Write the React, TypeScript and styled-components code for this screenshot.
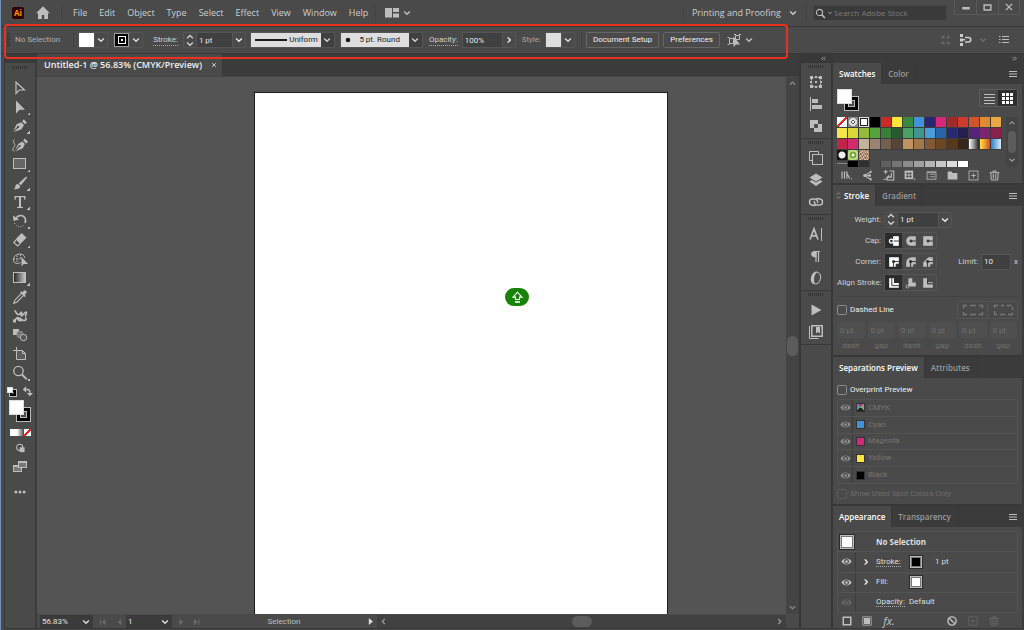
import React from "react";
import styled, { createGlobalStyle, css } from "styled-components";

const c = {
  panel: "#4a4a4a",
  dark: "#3b3b3b",
  line: "#383838",
  field: "#404040",
  soft: "#555555",
  text: "#cfcfcf",
  bright: "#f0f0f0",
  dim: "#6a6a6a",
  icon: "#bdbdbd",
};

const GlobalStyle = createGlobalStyle`
  * { box-sizing: border-box; }
  body { margin: 0; background: ${c.panel}; }
  button, input, select {
    font: inherit; color: inherit; background: none; border: 0; padding: 0; margin: 0;
    appearance: none; border-radius: 0; outline: none; min-width: 0;
  }
  ul { list-style: none; margin: 0; padding: 0; }
`;

/* ---------- icons ---------- */

const Svg = styled.svg<{ $w?: number; $h?: number }>`
  display: block;
  flex: none;
  width: ${(p) => p.$w ?? 16}px;
  height: ${(p) => p.$h ?? p.$w ?? 16}px;
  fill: none;
  stroke: currentColor;
`;

const F = { fill: "currentColor", stroke: "none" };
const cut = { stroke: "#333", strokeWidth: 1.1 };

const art: Record<string, React.ReactNode> = {
  select: <path d="M4 2.2v11.300l3.200-3.500h5.300z" strokeWidth="1.200" />,
  direct: <path {...F} d="M4 1.500v13l3.500-3.700H13z" />,
  pen: (
    <g {...F}>
      <path d="M9.300 4.200 12 7l-2.400 4.300L2 14l3.800-4a1.100 1.100 0 1 0-.8-.8L1.200 13.200 4.600 6.200z" />
      <path d="M10.200 3.300 11.800 1.300l3 3.100-1.800 1.800z" />
    </g>
  ),
  curvature: (
    <g>
      <g {...F}>
        <path d="M10.500 4.500 12.900 7l-2.100 4.200-7 3 3.600-4.100a1 1 0 1 0-.8-.8L3 13.300 6.300 6.700z" />
        <path d="m11.300 3.600 1.500-2 3.200 3.200-1.800 1.700z" />
      </g>
      <path d="M2.500 2.500C-.5 5 4 6.500 2.500 9.500-.2 12 .5 14 2.500 14" />
    </g>
  ),
  rect: <rect x="1.500" y="2.500" width="12" height="10" fill="#666" />,
  brush: (
    <g {...F}>
      <path d="M14.200 1.400 15.200 2.400 8.900 10.300 6.700 8.300z" />
      <path d="M6 9 8.200 11c0 2.500-3.200 3.800-6.600 3.200 1.900-.6 1.300-2.200 2-3.600C4 9.500 5 8.800 6 9z" />
    </g>
  ),
  type: <path {...F} d="M2.500 2h11v3.700h-1.100L12 3.300H9v9.200l1.800.5v1H5.200v-1l1.800-.5V3.300H4l-.4 2.400H2.500z" />,
  rotate: (
    <g>
      <path d="M4 5.200C6 1.800 11 1.400 13 5c.8 1.600.8 3.400 0 5" strokeWidth="1.600" />
      <path {...F} d="M1 2.500 7 6.500 1.500 8z" />
      <path d="M2.500 10C5 15 10 15 12.500 11" strokeDasharray="1 1.500" />
    </g>
  ),
  eraser: (
    <g>
      <path {...F} d="M9.700 1 14.500 5.800 8.300 12 3.600 7.300z" />
      <path d="M4 8 1.800 10.500 5.500 14 8 11.700" strokeWidth="1.200" />
    </g>
  ),
  shaper: (
    <g>
      <path d="M8.500 11.500C4 14 .8 11 1.500 8 2 4.500 5 3 8 3s4.500 1.500 4.500 4" />
      <path d="M1.500 8h8M5 4.500V11M8.500 3.500V8" strokeDasharray="1.500 1" />
      <path {...F} d="M9.500 6v9.500l2.200-2.500h4.300z" />
    </g>
  ),
  gradient: <rect x="1.500" y="2.500" width="12" height="10" fill="url(#toolGrad)" />,
  dropper: (
    <g>
      <path d="M9.300 4.700 2.800 11.200 1.800 14.200l3-1L11.300 6.700" strokeWidth="1.200" />
      <path {...F} d="M8 3.400 9.200 2.200 10.400 3.300 12 1.500a1.900 1.900 0 0 1 2.500 2.500L12.700 5.600 13.900 6.900 12.700 8.100z" />
    </g>
  ),
  puppet: (
    <g>
      <path d="M2.500 2.500C4 3 4 6 6 6.500S9 3.500 9.500 4.500 8.500 8 9.500 8s3-4 4.500-4-1.500 4 0 4.500" strokeWidth="1.700" />
      <path d="M2.500 13C4 9.500 6 9.500 8 10.500s3 2.500 4.500 2 2-2 1-3M5 9c0 3 2 4 5 3.500" strokeWidth="1.700" />
      <path {...F} d="M1 11.500h3v3H1z" />
    </g>
  ),
  blend: (
    <g>
      <rect {...F} x="1" y="2" width="6" height="6" />
      <rect x="5" y="4.500" width="6" height="6" rx="2" fill="#777" stroke="#8d8d8d" />
      <circle cx="11.500" cy="10.500" r="3.200" fill="#555" />
    </g>
  ),
  artboard: (
    <g>
      <path d="M4.500 1v3.500M1 4.500h3.500" />
      <path d="M4.500 4.500h6l3 3v6h-9z" fill="#5c5c5c" />
      <path d="M10.500 4.500v3h3" />
    </g>
  ),
  zoom: (
    <g>
      <circle cx="6.500" cy="6" r="4.700" strokeWidth="1.300" />
      <path d="m10 9.500 4.800 4.800" strokeWidth="1.900" />
    </g>
  ),
  drawMode: (
    <g>
      <circle cx="7" cy="6.500" r="3.800" strokeWidth="1.300" />
      <rect {...F} x="7" y="6.500" width="6" height="6" />
    </g>
  ),
  screen: (
    <g>
      <rect x="1.500" y="6.500" width="8" height="6" fill="#777" />
      <rect x="6.500" y="2.500" width="8" height="6" fill="#777" />
      <path d="M6 3.500h9M1 7.500h5" />
    </g>
  ),
  more: (
    <g {...F}>
      <circle cx="2.500" cy="8" r="2" />
      <circle cx="8" cy="8" r="2" />
      <circle cx="13.500" cy="8" r="2" />
    </g>
  ),
  down: <path d="M4.700 6.300 8 9.500l3.300-3.200" strokeWidth="1.600" />,
  up: <path d="M4.700 9.500 8 6.300l3.300 3.200" strokeWidth="1.600" />,
  right: <path d="M6.500 5 9.500 8l-3 3" strokeWidth="1.600" />,
  left: <path d="M9.500 5 6.500 8l3 3" strokeWidth="1.600" />,
  home: <path {...F} d="M8 1.200 1 8.300h2V14h3.800V10h2.400v4H13V8.300h2z" />,
  layout: <path {...F} d="M1 3h7v9.500H1zM9 3h6v4H9zM9 8.500h6v4H9z" />,
  mag: (
    <g>
      <circle cx="6.500" cy="6.500" r="4.500" strokeWidth="1.600" />
      <path d="m10 10 4.500 4.500" strokeWidth="2.200" />
    </g>
  ),
  burger: <path d="M4 5.500h8M4 8h8M4 10.500h8" />,
  list: <path d="M3 4.500h1.500M3 7.500h1.500M3 10.500h1.500M6 4.500h7M6 7.500h7M6 10.500h7" strokeWidth="1.200" />,
  gridDim: <path {...F} d="M3 2h3v4H3zM9 2h3v4H9zM3 10h3v4H3zM9 10h3v4H9zM1 3.500h5v1.500H1zM9 3.500h5v1.500H9zM1 11h5v1.500H1zM9 11h5v1.500H9z" />,
  align: (
    <g>
      <path {...F} d="M2 2h3v3H2zM2 6.500h3v3H2zM2 11h3v3H2z" />
      <path d="M7 5.500h3.500a2 2 0 0 1 0 4.500H7M5 7.800h2" strokeWidth="1.600" />
    </g>
  ),
  isolate: (
    <g>
      <path d="M3.500 6.500h4v5h-4zM9.500 3.500h4v4h-4zM1.500 5.500h2M1.500 12.500h2M8 2.500h2M13 2.500h2" />
      <path {...F} d="M7.500 4.500V15l2.500-2.500h4.200z" />
    </g>
  ),
  transform: (
    <g>
      <rect x="3.500" y="3.500" width="9" height="9" strokeDasharray="2 1" />
      <path {...F} d="M2 2h3v3H2zM11 2h3v3h-3zM2 11h3v3H2zM11 11h3v3h-3zM7 7h2v2H7zM7 2h2v2H7zM7 12h2v2H7zM2 7h2v2H2zM12 7h2v2h-2z" />
    </g>
  ),
  alignPanel: (
    <g>
      <path d="M2.500 1v14" />
      <path {...F} d="M4 3h6v4H4zM4 9h10v4H4z" />
    </g>
  ),
  pathfinder: (
    <g>
      <path {...F} d="M2 2h8v4h4v8H6v-4H2z" />
      <path d="M6.500 6.500h3v3h-3z" fill="#4a4a4a" stroke="#4a4a4a" />
    </g>
  ),
  transparency: (
    <g>
      <path d="M4.500 10.500h-3v-9h9v3" />
      <rect x="4.500" y="4.500" width="10" height="10" />
    </g>
  ),
  layers: (
    <g {...F}>
      <path d="M8 1.500 14.500 5.500 8 9.500 1.500 5.500z" />
      <path d="M1.500 9.500 4 8l4 2.500L12 8l2.500 1.500L8 14z" />
    </g>
  ),
  links: (
    <path d="M8.500 10A3 3 0 0 1 4.500 11a3 3 0 0 1 0-6h2a3 3 0 0 1 3 4M7.500 6A3 3 0 0 1 11.500 5a3 3 0 0 1 0 6h-2a3 3 0 0 1-3-4" strokeWidth="1.500" />
  ),
  character: (
    <g>
      <path d="M2 13.500 6 3l4 10.500M3.500 9.800h5" strokeWidth="1.700" />
      <path d="M13.500 2v13" />
    </g>
  ),
  paragraph: (
    <g>
      <path {...F} d="M8.500 3v6.500C1.500 9.500 1.500 3 7 3z" />
      <path d="M8 3v11M10.500 3v11M7 3.500h5" strokeWidth="1.200" />
    </g>
  ),
  opentype: (
    <g>
      <ellipse cx="8" cy="8" rx="4.500" ry="6" transform="rotate(12 8 8)" />
      <path {...F} d="M10 1.800C6.500 3.500 5 9 7 14.200 0 13.500 2.500 2 10 1.800z" />
    </g>
  ),
  play: <path {...F} d="M3.500 2.500v11l10-5.500z" />,
  libraries: (
    <g>
      <path d="M1.500 2v12.500h9" />
      <path d="M3.800 1.800h10.400v10.400H3.800z" strokeWidth="1.500" />
      <path {...F} d="M8 3h4v6.500L10 8 8 9.500z" />
    </g>
  ),
  swLib: <path d="M2.500 3v9M5.500 3v9M7.500 3.500l4.500 8.500M8.500 3v9M13.500 12h1.500" strokeWidth="1.400" />,
  swShare: (
    <g>
      <path d="M12 3.500 4 8l8 5M7 8h5" strokeWidth="1.300" />
      <path {...F} d="M3 6.500h4v3H3zM9 6.500h3v3H9zM11 2h2v3h-2zM11 11h2v3h-2z" />
    </g>
  ),
  swAdd: <path d="M2 3.500h5M9 2.500h5.500v11H6.500V10M4.500 1v5M2 12.500h5M11.500 5v5h-5l2.500-2" strokeWidth="1.300" />,
  swKind: (
    <g>
      <rect x="2" y="2" width="10.500" height="10.500" {...F} />
      <path d="M5.500 4v7M9 4v7M3.500 5.500h7.500M3.500 9h7.500" stroke="#4a4a4a" />
      <path d="M13.500 12.500h1.500" strokeWidth="1.500" />
    </g>
  ),
  swOptions: (
    <g>
      <rect x="2.500" y="3.500" width="11" height="9" />
      <path d="M5 6.500h1M5 9.500h1M7 6.500h5M7 9.500h5M3 4.500h10" />
    </g>
  ),
  folder: <path {...F} d="M2 3h5l1 2h6v8H2z" />,
  plus: (
    <g>
      <rect x="2.500" y="2.500" width="11" height="11" />
      <path d="M8 5v6M5 8h6" />
    </g>
  ),
  trash: <path d="M2 4.500h12M6 4V2.500h4V4M3.500 4.500l.5 9h8l.5-9M6.500 6v6M9.500 6v6" strokeWidth="1.200" />,
  square: <rect x="3" y="3" width="10" height="10" strokeWidth="2" />,
  filled: (
    <g>
      <rect x="2.500" y="2.500" width="11" height="11" />
      <path {...F} d="M4 4h8v8H4z" />
    </g>
  ),
  no: (
    <g strokeWidth="1.900">
      <circle cx="8" cy="8" r="5.500" />
      <path d="m4.200 4.200 7.600 7.600" />
    </g>
  ),
  eye: (
    <g>
      <path {...F} d="M.5 8C4 2.300 12 2.300 15.500 8 12 13.700 4 13.700.5 8z" />
      <circle cx="8" cy="8" r="3.600" fill="#4a4a4a" stroke="none" />
      <circle cx="8" cy="8" r="2" {...F} />
    </g>
  ),
  capButt: (
    <g>
      <path {...F} d="M7 2.500h6.500v11H7z" />
      <path {...cut} d="M7 8h6.500" />
      <circle cx="5" cy="8" r="2.200" fill="#2b2b2b" strokeWidth="1.400" />
    </g>
  ),
  capRound: (
    <g>
      <path {...F} d="M8 2.500h5.500v11H8a5.500 5.500 0 0 1 0-11z" />
      <path {...cut} d="M8 8h5.500" />
      <path d="M7 7h2v2H7z" {...cut} fill="#333" />
    </g>
  ),
  capSquare: (
    <g>
      <path {...F} d="M2.500 2.500h11v11h-11z" />
      <path {...cut} d="M8 8h5.500" />
      <path d="M7 7h2v2H7z" {...cut} fill="#333" />
    </g>
  ),
  joinMiter: (
    <g>
      <path {...F} d="M2.500 2.500h11v8H11v3H2.500z" />
      <path {...cut} d="M7.500 13.500v-6h6" />
      <path {...cut} fill="#333" d="M6.500 6.500h2v2h-2zM10.500 10.500h3v3h-3z" />
    </g>
  ),
  joinRound: (
    <g>
      <path {...F} d="M9 2.500h4.500v8h-3v3h-8V9A6.500 6.500 0 0 1 9 2.500z" />
      <path {...cut} d="M7.500 13.500v-6h6" />
      <path {...cut} fill="#333" d="M6.500 6.500h2v2h-2z" />
    </g>
  ),
  joinBevel: (
    <g>
      <path {...F} d="M8.500 2.500h5v8h-3v3h-8V8.500z" />
      <path {...cut} d="M7.500 13.500v-6h6" />
      <path {...cut} fill="#333" d="M6.500 6.500h2v2h-2z" />
    </g>
  ),
  alCenter: (
    <g>
      <path {...F} d="M2.500 2.500H8v5.500h5.500v5.500h-11z" />
      <path {...cut} d="M5.500 2.500v8.500h8" />
    </g>
  ),
  alIn: (
    <g>
      <path {...F} d="M5 2.500h4.500v5h4v4.500H5z" />
      <circle cx="4" cy="12" r="1.700" />
    </g>
  ),
  alOut: (
    <g>
      <path {...F} d="M2.500 2.500h4.500v6h6.500v5h-11z" />
      <path d="M8 7.500h5.500" />
      <path {...cut} d="M7.500 4v5h6" />
    </g>
  ),
  dashA: <path d="M2.500 6V3.500H6M9 3.500h6M18 3.500h3.500V6M2.500 10v2.500H6M9 12.500h6M18 12.500h3.500V10" strokeWidth="1.400" />,
  dashB: <path d="M3.500 6V3.500H7M10 3.500h3M16 3.500h4.500M21.500 5v3M3.500 9v3.500H6M9 12.500h5M17 12.500h4.500V10.500" strokeWidth="1.400" />,
  first: (
    <g>
      <path d="M4 3.500v9" strokeWidth="1.800" />
      <path {...F} d="M12 3v10L6 8z" />
    </g>
  ),
  prev: <path {...F} d="M10 3v10L4.500 8z" />,
  next: <path {...F} d="M5.500 3v10L11.500 8z" />,
  last: (
    <g>
      <path d="M12.500 3.500v9" strokeWidth="1.800" />
      <path {...F} d="M4.500 3v10l6-5z" />
    </g>
  ),
  min: <path d="M2 10h12" strokeWidth="4" />,
  max: <path d="M2 3.500h12v9H2z" strokeWidth="2.500" />,
  close: <path d="m3 3 10 10M13 3 3 13" strokeWidth="2.200" />,
  dblLeft: <path d="M7.500 5 4.500 8l3 3M11.500 5l-3 3 3 3" strokeWidth="1.500" />,
  dblRight: <path d="m4.500 5 3 3-3 3M8.500 5l3 3-3 3" strokeWidth="1.500" />,
  swap: (
    <g>
      <path d="M4 5h3.500a4 4 0 0 1 4 4V11" strokeWidth="2" />
      <path {...F} d="M6 .5v9L1 5zM7 10h9l-4.500 5z" />
    </g>
  ),
  capsLock: (
    <g strokeWidth="1.400">
      <path d="M8 1.500 2.500 7.500h3v3h5v-3h3z" />
      <path d="M5 13.500h6" strokeWidth="2" />
    </g>
  ),
  sort: <path d="M5.500 6.500 8 4l2.500 2.500M5.500 9.500 8 12l2.500-2.500" stroke="#999" strokeWidth="1.200" />,
};

const Icon = ({ n, w = 16, h }: { n: string; w?: number; h?: number }) => (
  <Svg $w={w} $h={h} viewBox={n.startsWith("dash") ? "0 0 24 16" : "0 0 16 16"} aria-hidden="true">
    {art[n]}
  </Svg>
);

/* ---------- shell ---------- */

const Shell = styled.div`
  min-height: 100vh;
  display: flex;
  flex-direction: column;
  position: relative;
  padding-bottom: 1px;
  border-left: 1px solid #7590b0;
  background: ${c.panel};
  color: ${c.text};
  font: 8px/10px Roboto, "Liberation Sans", sans-serif;
`;

const IconButton = styled.button<{ $w?: number; $h?: number; $tone?: string }>`
  display: flex;
  flex: none;
  align-items: center;
  justify-content: center;
  width: ${(p) => p.$w ?? 16}px;
  height: ${(p) => p.$h ?? 16}px;
  color: ${(p) => p.$tone ?? c.icon};
`;

const Spacer = styled.div`
  flex: 1;
`;

const TitleBar = styled.header`
  display: flex;
  align-items: center;
  height: 27px;
  padding: 0 4px 0 11px;
  border-bottom: 1px solid ${c.line};
  font: 9px/12px "Open Sans", "Noto Sans", sans-serif;
`;

const Logo = styled.span`
  width: 12px;
  height: 12px;
  border-radius: 2px;
  background: #300;
  color: #ff9a00;
  font: bold 8px/12px "Open Sans", sans-serif;
  text-align: center;
`;

const Divider = styled.span<{ $h?: number }>`
  flex: none;
  width: 1px;
  height: ${(p) => p.$h ?? 16}px;
  background: #424242;
`;

const Menus = styled.nav`
  display: flex;
  gap: 12px;
  margin: 0 7px 0 11px;
`;

const HomeButton = styled(IconButton)`
  margin: 0 10px 0 11px;
`;

const ArrangeButton = styled(IconButton)`
  margin-left: 8px;
`;

const Workspace = styled.button`
  display: flex;
  align-items: center;
  gap: 5px;
  margin: 0 6px 0 8px;
`;

const Search = styled.label`
  display: flex;
  align-items: center;
  width: 134px;
  height: 16px;
  margin: 0 7px 0 6px;
  padding-left: 1px;
  border: 1px solid #484848;
  border-radius: 2px;
  background: #3a3a3a;
  color: ${c.icon};
  font-size: 8px;
  input {
    flex: 1;
  }
  input::placeholder {
    color: #7c7c7c;
    opacity: 1;
  }
`;

const WindowButtons = styled.div`
  display: flex;
  align-self: flex-start;
  border: 1px solid #5a5a5a;
  border-top: 0;
  border-radius: 0 0 2px 2px;
  button + button {
    border-left: 1px solid #5a5a5a;
  }
`;

/* ---------- control bar ---------- */

const ControlBar = styled.section`
  display: flex;
  align-items: center;
  height: 27px;
  padding: 0 5px 0 6px;
  border-bottom: 1px solid ${c.line};
`;

const Grip = styled.span<{ $v?: boolean }>`
  flex: none;
  width: ${(p) => (p.$v ? 3 : 16)}px;
  height: ${(p) => (p.$v ? 14 : 3)}px;
  background: repeating-linear-gradient(${(p) => (p.$v ? "180deg" : "90deg")}, #333 0 1px, transparent 1px 2px);
`;

const Label = styled.span<{ $link?: boolean; $tone?: string }>`
  color: ${(p) => p.$tone ?? c.text};
  ${(p) => p.$link && css`border-bottom: 1px dotted #aaa;`}
`;

const BarLabel = styled(Label)<{ $l: number; $r: number }>`
  margin: 0 ${(p) => p.$r}px 0 ${(p) => p.$l}px;
`;

const Combo = styled.div<{ $gap?: number }>`
  display: flex;
  align-items: center;
  height: 16px;
  margin-right: ${(p) => p.$gap ?? 0}px;
  border: 1px solid ${c.soft};
  border-radius: 1px;
  > * + * {
    border-left: 1px solid ${c.soft};
  }
`;

const Chip = styled.button<{ $bg: string }>`
  width: 15px;
  height: 14px;
  background: ${(p) => p.$bg};
`;

const StrokeChip = styled(Chip)`
  display: grid;
  place-items: center;
  box-shadow: inset 0 0 0 1px #999;
  &::after {
    content: "";
    width: 6px;
    height: 6px;
    border: 1px solid #fff;
    background: radial-gradient(#fff 0 1px, #000 1px);
  }
`;

const Field = styled.input<{ $w: number }>`
  width: ${(p) => p.$w}px;
  height: 14px;
  padding-left: 2px;
  background: ${c.field};
  color: #e6e6e6;
`;

const Spinner = styled.div`
  display: flex;
  flex-direction: column;
  width: 12px;
  height: 14px;
  button {
    display: flex;
    align-items: center;
    justify-content: center;
    height: 7px;
    overflow: hidden;
  }
`;

const PickWrap = styled.label<{ $w: number; $pad: number }>`
  display: flex;
  align-items: center;
  position: relative;
  width: ${(p) => p.$w}px;
  height: 16px;
  margin-right: 5px;
  border: 1px solid ${c.soft};
  background: linear-gradient(90deg, #dedede calc(100% - 13px), ${c.field} 0);
  color: #1c1c1c;
  select {
    width: 100%;
    height: 14px;
    padding-right: ${(p) => p.$pad}px;
    text-align: right;
    text-align-last: right;
  }
  > svg {
    position: absolute;
    pointer-events: none;
  }
  > svg:first-child {
    left: 4px;
  }
  > svg:last-child {
    right: 0;
    color: ${c.text};
  }
`;

const PushButton = styled.button`
  height: 16px;
  margin-left: 4px;
  padding: 0 6px;
  border: 1px solid #666;
  border-radius: 2px;
  color: ${c.bright};
  white-space: nowrap;
`;

const SimilarButton = styled(IconButton)`
  margin-left: 6px;
`;

const Callout = styled.div`
  position: absolute;
  top: 24px;
  left: 3px;
  width: 784px;
  height: 35px;
  border: 2px solid #e8321f;
  border-radius: 4px;
  pointer-events: none;
`;

/* ---------- work area ---------- */

const Work = styled.main`
  flex: 1;
  display: flex;
  margin-left: 3px;
  border-left: 1px solid ${c.line};
  border-bottom: 1px solid ${c.line};
  background: ${c.dark};
`;

const Rail = styled.aside`
  display: flex;
  flex-direction: column;
  align-items: center;
  width: 30px;
  margin: 9px 2px 0 0;
  background: ${c.panel};
  color: ${c.icon};
`;

const RailGrip = styled.div`
  display: flex;
  align-items: center;
  justify-content: center;
  height: 9px;
`;

const Tools = styled.div`
  display: flex;
  flex-direction: column;
  padding-top: 6px;
`;

const Tool = styled(IconButton)<{ $more?: boolean }>`
  width: 22px;
  height: 19px;
  position: relative;
  ${(p) =>
    p.$more &&
    css`
      &::after {
        content: "";
        position: absolute;
        right: 1px;
        bottom: 1px;
        width: 3px;
        height: 3px;
        background: linear-gradient(135deg, transparent 50%, ${c.icon} 50%);
      }
    `}
`;

const RailRow = styled.div<{ $h: number; $gap?: number }>`
  display: flex;
  align-items: center;
  justify-content: center;
  gap: ${(p) => p.$gap ?? 0}px;
  height: ${(p) => p.$h}px;
`;

const Pair = styled.span<{ $size: number; $mini?: boolean }>`
  position: relative;
  display: block;
  flex: none;
  width: ${(p) => p.$size}px;
  height: ${(p) => p.$size}px;
  i {
    position: absolute;
    box-sizing: border-box;
    width: ${(p) => (p.$mini ? 6 : 15)}px;
    height: ${(p) => (p.$mini ? 6 : 15)}px;
  }
  i:first-child {
    right: 0;
    bottom: 0;
    border: ${(p) => (p.$mini ? 2 : 4)}px solid #000;
    outline: 1px solid #bbb;
    outline-offset: ${(p) => (p.$mini ? 0 : -1)}px;
    background: ${c.panel};
    ${(p) => !p.$mini && css`box-shadow: inset 0 0 0 1px #bbb;`}
  }
  i:last-child {
    top: 0;
    left: 0;
    background: #fff;
    border: 1px solid #ddd;
  }
`;

const Modes = styled.span`
  display: grid;
  grid-template-columns: repeat(3, 7px);
  height: 7px;
  i:nth-child(1) { background: #fff; }
  i:nth-child(2) { background: linear-gradient(90deg, #fff, #444); }
  i:nth-child(3) { background: linear-gradient(135deg, #fff 38%, #e22 38% 62%, #fff 62%); }
`;

const Doc = styled.section`
  flex: 1;
  min-width: 0;
  display: flex;
  flex-direction: column;
`;

const TabStrip = styled.div`
  display: flex;
  height: 23px;
  border-bottom: 1px solid #454545;
`;

const DocTab = styled.div`
  display: flex;
  align-items: center;
  gap: 5px;
  padding: 0 1px 0 7px;
  background: ${c.panel};
  color: ${c.bright};
  font: 600 9px/12px "Open Sans", "Noto Sans", sans-serif;
`;

const Stage = styled.div`
  flex: 1;
  display: flex;
`;

const Canvas = styled.div`
  flex: 1;
  position: relative;
  overflow: hidden;
  background: #545454;
`;

const Artboard = styled.div`
  position: absolute;
  top: 15px;
  bottom: 0;
  left: 217px;
  width: 414px;
  border: 1px solid #1c1c1c;
  border-bottom: 0;
  background: #fff;
`;

const CapsBadge = styled.div`
  position: absolute;
  top: 195px;
  left: 250px;
  display: grid;
  place-items: center;
  width: 24px;
  height: 18px;
  border-radius: 9px;
  background: #168306;
  color: #fff;
`;

const VScroll = styled.div`
  display: flex;
  flex-direction: column;
  justify-content: space-between;
  align-items: center;
  width: 13px;
  background: #444;
  color: #8c8c8c;
`;

const Thumb = styled.span<{ $w: number; $h: number }>`
  width: ${(p) => p.$w}px;
  height: ${(p) => p.$h}px;
  border-radius: 6px;
  background: #5c5c5c;
`;

const Status = styled.footer`
  display: flex;
  align-items: center;
  height: 14px;
  padding: 1px 13px 0 3px;
  background: ${c.panel};
`;

const StatusField = styled.label<{ $w: number }>`
  position: relative;
  display: flex;
  align-items: center;
  width: ${(p) => p.$w}px;
  height: 13px;
  background: ${c.dark};
  color: #e0e0e0;
  select {
    width: 100%;
    padding-left: 2px;
  }
  svg {
    position: absolute;
    right: 0;
    pointer-events: none;
  }
`;

const StatusText = styled.span`
  width: 158px;
  margin-left: 3px;
  text-align: center;
  color: #bdbdbd;
`;

const HTrack = styled.div`
  flex: 1;
  display: flex;
  align-items: center;
  justify-content: space-between;
  height: 13px;
  background: #414141;
  color: #999;
`;

/* ---------- dock and panels ---------- */

const Dock = styled.aside`
  display: flex;
  flex-direction: column;
  width: 34px;
  padding: 0 2px;
  background: ${c.line};
`;

const Collapse = styled.button`
  display: flex;
  flex: none;
  align-items: center;
  justify-content: flex-end;
  height: 9px;
  padding-right: 3px;
  color: #aaa;
`;

const DockGroup = styled.div`
  display: flex;
  flex-direction: column;
  align-items: center;
  padding: 2px 0 1px;
  border-bottom: 1px solid ${c.line};
  background: ${c.panel};
  ${Grip} {
    margin-bottom: 3px;
  }
`;

const DockRest = styled.div`
  flex: 1;
  background: ${c.panel};
`;

const Panels = styled.aside`
  display: flex;
  flex-direction: column;
  width: 191px;
  padding-right: 2px;
`;

const Panel = styled.section<{ $grow?: boolean }>`
  display: flex;
  flex-direction: column;
  background: ${c.panel};
  flex: ${(p) => (p.$grow ? 1 : "none")};
  & + & {
    border-top: 2px solid ${c.line};
  }
`;

const Tabs = styled.div`
  display: flex;
  align-items: center;
  height: 21px;
  background: ${c.dark};
  font: 600 8px/10px "Open Sans", "Noto Sans", sans-serif;
`;

const Tab = styled.button<{ $on?: boolean; $sort?: boolean }>`
  display: flex;
  align-items: center;
  height: 21px;
  padding: 0 6px 0 ${(p) => (p.$sort ? 0 : 6)}px;
  border-right: 1px solid ${c.line};
  background: ${(p) => (p.$on ? c.panel : "none")};
  color: ${(p) => (p.$on ? "#fff" : "#9a9a9a")};
  white-space: nowrap;
`;

const Body = styled.div<{ $h?: number; $top: number }>`
  display: flex;
  flex-direction: column;
  min-height: ${(p) => p.$h ?? 0}px;
  padding: ${(p) => p.$top}px 4px 0;
`;

const Row = styled.div<{ $h?: number; $gap?: number; $topAlign?: boolean }>`
  display: flex;
  align-items: ${(p) => (p.$topAlign ? "flex-start" : "center")};
  gap: ${(p) => p.$gap ?? 0}px;
  height: ${(p) => p.$h ?? 21}px;
`;

const Rule = styled.hr`
  width: 100%;
  height: 1px;
  margin: 3px 0 0;
  border: 0;
  background: #434343;
`;

const ViewToggle = styled.div`
  display: flex;
  border: 1px solid #5c5c5c;
  border-radius: 2px;
  button:last-child {
    background: #2e2e2e;
    color: #fff;
  }
`;

const SwatchBox = styled.div`
  display: flex;
  justify-content: space-between;
  height: 50px;
  margin-top: 6px;
  overflow: hidden;
`;

const SwatchGrid = styled.div`
  display: grid;
  grid-template-columns: repeat(15, 11px);
  grid-auto-rows: 11px;
  height: 56px;
`;

const Swatch = styled.button<{ $bg: string }>`
  border: solid #3c3c3c;
  border-width: 0 1px 1px 0;
  background: ${(p) => p.$bg};
`;

const SwatchScroll = styled.div`
  display: flex;
  flex-direction: column;
  align-items: center;
  justify-content: space-between;
  width: 12px;
  padding-bottom: 1px;
  background: #444;
  color: #999;
`;

const Footer = styled.div<{ $h: number }>`
  display: flex;
  align-items: center;
  justify-content: space-between;
  height: ${(p) => p.$h}px;
  padding: 0 16px 0 2px;
`;

const RightLabel = styled.span`
  width: 44px;
  margin-right: 3px;
  text-align: right;
  white-space: nowrap;
`;

const Toggles = styled.div`
  display: flex;
  border: 1px solid #555;
  border-radius: 2px;
  button:first-child {
    background: #2b2b2b;
    color: #fff;
  }
`;

const CheckLabel = styled.label<{ $off?: boolean }>`
  display: flex;
  align-items: center;
  gap: 3px;
  color: ${(p) => (p.$off ? c.dim : c.bright)};
  input {
    width: 10px;
    height: 10px;
    border: 1px solid ${(p) => (p.$off ? "#5c5c5c" : "#8c8c8c")};
    border-radius: 2px;
  }
`;

const DashGrid = styled.div`
  display: grid;
  grid-template-columns: repeat(6, 1fr);
  gap: 3px;
  padding-right: 1px;
  color: #707070;
  text-align: center;
  label {
    display: flex;
    flex-direction: column;
    gap: 3px;
  }
  input {
    width: 100%;
    height: 16px;
    padding-left: 3px;
    background: #4f4f4f;
    border-radius: 1px;
  }
`;

const DashPair = styled.div`
  display: flex;
  margin-left: auto;
  border: 1px solid #555;
  border-radius: 2px;
  button + button {
    border-left: 1px solid #555;
  }
`;

const List = styled.ul<{ $h: number }>`
  display: flex;
  flex-direction: column;
  height: ${(p) => p.$h}px;
  border: 1px solid #535353;
  border-radius: 2px;
  li {
    flex: 1;
    display: flex;
    align-items: center;
  }
  li + li {
    border-top: 1px solid #535353;
  }
`;

const InkChip = styled.span<{ $bg: string }>`
  width: 9px;
  height: 9px;
  margin: 0 3px;
  border: 1px solid #333;
  background: ${(p) => p.$bg};
`;

const Cell = styled.span<{ $w: number; $line?: boolean }>`
  display: flex;
  align-items: center;
  justify-content: center;
  align-self: stretch;
  width: ${(p) => p.$w}px;
  border-right: 1px solid ${(p) => (p.$line ? "#3c3c3c" : "transparent")};
`;

const Well = styled.button<{ $bg: string; $s: number }>`
  width: ${(p) => p.$s}px;
  height: ${(p) => p.$s}px;
  border: 1px solid #bbb;
  outline: 1px solid #2a2a2a;
  box-shadow: inset 0 0 0 1px #777;
  background: ${(p) => p.$bg};
`;

const AppLabel = styled.span<{ $w: number; $link?: boolean; $bold?: boolean }>`
  min-width: ${(p) => p.$w}px;
  color: #dedede;
  font: ${(p) => (p.$bold ? 'bold 8px/10px "Open Sans", "Noto Sans", sans-serif' : "inherit")};
  span {
    ${(p) => p.$link && css`border-bottom: 1px dotted #aaa;`}
  }
`;

const Fx = styled.span`
  font: italic 11px/12px "Noto Sans", sans-serif;
`;

const menus = ["File", "Edit", "Object", "Type", "Select", "Effect", "View", "Window", "Help"];

const tools: [string, boolean][] = [
  ["select", false], ["direct", true], ["pen", true], ["curvature", false], ["rect", true],
  ["brush", true], ["type", true], ["rotate", true], ["eraser", true], ["shaper", false],
  ["gradient", true], ["dropper", false], ["puppet", false], ["blend", false], ["artboard", false],
  ["zoom", true],
];

const swatches = [
  "linear-gradient(135deg,#fff 44%,#e22 44% 56%,#fff 56%)",
  "radial-gradient(circle,#fff 1px,#555 1px 2px,#ddd 2px 4px,#888 4px)",
  "linear-gradient(#fff,#fff) center/6px 6px no-repeat, linear-gradient(#222,#222) center/8px 8px no-repeat, #ddd",
  "#000", "#cc2a27", "#fbe73b", "#39893f", "#4193d9", "#29256f", "#d4287a", "#a32a2a", "#d0392e", "#d3542a", "#e08c2e", "#eaa844",
  "#f5e547", "#dad73a", "#95b938", "#54a33c", "#368038", "#265a2f", "#4ba064", "#41948f", "#499dd9", "#2a62a6", "#262a72", "#251f50", "#52247a", "#7d236f", "#8c204f",
  "#c12648", "#d32c6c", "#c3b499", "#998474", "#73614f", "#564439", "#bd9563", "#a0784a", "#825934", "#6b4727", "#573819", "#38261a",
  "linear-gradient(90deg,#fff,#222)", "linear-gradient(90deg,#f9e04a,#ee9a2c,#d3402a)", "linear-gradient(90deg,#2f7fc8,#dcebf7)",
  "radial-gradient(circle,#eee 3px,#111 4px)",
  "radial-gradient(circle,#fff 1px,#6ca52c 2px 3px,#d6e6a0 4px,#78aa38)",
  "repeating-linear-gradient(60deg,#8b5e45aa 0 1px,#d8bda4aa 1px 2px), repeating-linear-gradient(-30deg,#6b4430 0 1px,#e0c8b0 1px 3px)",
];
const grays = ["linear-gradient(#4a4a4a 2px,#888 2px 3px,#4a4a4a 3px)", "#000", "#303030", "#4a4a4a", "#606060", "#757575", "#8c8c8c", "#a0a0a0", "#b3b3b3", "#c8c8c8", "#dcdcdc", "#fff"];

const inks: [string, string][] = [
  ["CMYK", "conic-gradient(from -45deg,#a03aa0 0 90deg,#a8a038 90deg 180deg,#222 180deg 270deg,#4aa0a0 270deg)"],
  ["Cyan", "#3e93dc"],
  ["Magenta", "#d4287a"],
  ["Yellow", "#fbe73b"],
  ["Black", "#000"],
];

const Numeric = ({ label, w, gap }: { label: string; w: number; gap?: number }) => (
  <Combo $gap={gap}>
    <Spinner>
      <button aria-label={`${label} up`}><Icon n="up" w={14} /></button>
      <button aria-label={`${label} down`}><Icon n="down" w={14} /></button>
    </Spinner>
    <Field $w={w} aria-label={label} defaultValue="1 pt" />
    <IconButton $w={13} $h={14} $tone="#eee" aria-label={`${label} presets`}><Icon n="down" w={14} /></IconButton>
  </Combo>
);

const Drop = ({ label }: { label: string }) => (
  <IconButton $w={13} $h={14} $tone="#ddd" aria-label={label}><Icon n="down" w={14} /></IconButton>
);

const ToggleSet = ({ names }: { names: string[] }) => (
  <Toggles>
    {names.map((n) => <IconButton key={n} $w={17} $h={15} aria-label={n}><Icon n={n} w={14} /></IconButton>)}
  </Toggles>
);

export default function App() {
  return (
    <Shell>
      <GlobalStyle />
      <svg width="0" height="0" style={{ position: "absolute" }} aria-hidden="true">
        <linearGradient id="toolGrad"><stop offset="0" stopColor="#222" /><stop offset="1" stopColor="#ccc" /></linearGradient>
      </svg>

      <TitleBar>
        <Logo>Ai</Logo>
        <HomeButton aria-label="Home"><Icon n="home" /></HomeButton>
        <Divider />
        <Menus>{menus.map((m) => <button key={m}>{m}</button>)}</Menus>
        <Divider />
        <ArrangeButton $w={30} aria-label="Arrange documents"><Icon n="layout" /><Icon n="down" w={14} /></ArrangeButton>
        <Spacer />
        <Divider />
        <Workspace>Printing and Proofing<Icon n="down" w={14} /></Workspace>
        <Divider />
        <Search><Icon n="mag" w={11} /><Icon n="down" w={8} /><input placeholder="Search Adobe Stock" aria-label="Search Adobe Stock" /></Search>
        <WindowButtons>
          <IconButton $w={21} $h={14} aria-label="Minimize"><Icon n="min" w={10} /></IconButton>
          <IconButton $w={22} $h={14} aria-label="Maximize"><Icon n="max" w={9} /></IconButton>
          <IconButton $w={21} $h={14} aria-label="Close"><Icon n="close" w={10} /></IconButton>
        </WindowButtons>
      </TitleBar>

      <ControlBar>
        <Grip $v />
        <BarLabel $l={5} $r={13} $tone="#b0b0b0">No Selection</BarLabel>
        <Divider />
        <BarLabel $l={4} $r={0} />
        <Combo $gap={5}><Chip $bg="#fff" aria-label="Fill" /><Drop label="Fill options" /></Combo>
        <Combo><StrokeChip $bg="#000" aria-label="Stroke color" /><Drop label="Stroke options" /></Combo>
        <BarLabel $link $l={10} $r={5}>Stroke:</BarLabel>
        <Numeric label="Stroke weight" w={36} gap={4} />
        <PickWrap $w={85} $pad={16}>
          <Svg $w={32} $h={4} viewBox="0 0 32 4"><path d="M0 2h32" strokeWidth="2" /></Svg>
          <select aria-label="Width profile"><option>Uniform</option></select>
          <Icon n="down" w={14} />
        </PickWrap>
        <PickWrap $w={83} $pad={22}>
          <Svg $w={6} viewBox="0 0 6 6"><circle cx="3" cy="3" r="2.300" {...F} /></Svg>
          <select aria-label="Brush"><option>5 pt. Round</option></select>
          <Icon n="down" w={14} />
        </PickWrap>
        <BarLabel $link $l={1} $r={4}>Opacity:</BarLabel>
        <Combo $gap={6}><Field $w={39} aria-label="Opacity" defaultValue="100%" /><IconButton $w={13} $h={14} $tone="#eee" aria-label="Opacity slider"><Icon n="right" w={14} /></IconButton></Combo>
        <BarLabel $l={0} $r={4} $tone="#a8a8a8">Style:</BarLabel>
        <Combo $gap={6}><Chip $bg="#dedede" aria-label="Graphic style" /><Drop label="Styles" /></Combo>
        <Divider />
        <PushButton>Document Setup</PushButton>
        <PushButton>Preferences</PushButton>
        <SimilarButton $w={30} aria-label="Select similar"><Icon n="isolate" /><Icon n="down" w={14} /></SimilarButton>
        <Spacer />
        <IconButton $w={18} $tone="#666" aria-label="Align to grid"><Icon n="gridDim" w={12} /></IconButton>
        <IconButton $w={22} $tone="#ccc" aria-label="Snap"><Icon n="align" /></IconButton>
        <IconButton $w={12} $tone="#6c6c6c" aria-label="Snap options"><Icon n="down" w={14} /></IconButton>
        <IconButton $w={30} aria-label="Control menu"><Icon n="list" /></IconButton>
      </ControlBar>

      <Work>
        <Rail>
          <RailGrip><Grip /></RailGrip>
          <Tools>{tools.map(([n, more]) => <Tool key={n} $more={more} aria-label={n}><Icon n={n} /></Tool>)}</Tools>
          <RailRow $h={18} $gap={6}><Pair $size={9} $mini><i /><i /></Pair><Icon n="swap" w={11} /></RailRow>
          <RailRow $h={22}><Pair $size={22}><i /><i /></Pair></RailRow>
          <RailRow $h={20}><Modes><i /><i /><i /></Modes></RailRow>
          <RailRow $h={12}><IconButton aria-label="Drawing mode" $h={12}><Icon n="drawMode" w={13} /></IconButton></RailRow>
          <RailRow $h={26}><IconButton aria-label="Screen mode"><Icon n="screen" /></IconButton></RailRow>
          <RailRow $h={24}><Icon n="more" w={12} /></RailRow>
        </Rail>

        <Doc>
          <TabStrip>
            <DocTab>Untitled-1 @ 56.83% (CMYK/Preview)<IconButton $w={14} $tone="#ddd" aria-label="Close document"><Icon n="close" w={6} /></IconButton></DocTab>
          </TabStrip>
          <Stage>
            <Canvas>
              <Artboard><CapsBadge><Icon n="capsLock" w={13} /></CapsBadge></Artboard>
            </Canvas>
            <VScroll><Icon n="up" w={13} /><Thumb $w={11} $h={20} /><Icon n="down" w={13} /></VScroll>
          </Stage>
          <Status>
            <StatusField $w={53}><select aria-label="Zoom level"><option>56.83%</option></select><Icon n="down" w={14} /></StatusField>
            <IconButton $w={20} $h={13} $tone={c.dim} aria-label="First artboard"><Icon n="first" w={10} /></IconButton>
            <IconButton $w={13} $h={13} $tone={c.dim} aria-label="Previous artboard"><Icon n="prev" w={10} /></IconButton>
            <StatusField $w={46}><select aria-label="Artboard"><option>1</option></select><Icon n="down" w={14} /></StatusField>
            <IconButton $w={18} $h={13} $tone={c.dim} aria-label="Next artboard"><Icon n="next" w={10} /></IconButton>
            <IconButton $w={12} $h={13} $tone={c.dim} aria-label="Last artboard"><Icon n="last" w={10} /></IconButton>
            <StatusText>Selection</StatusText>
            <IconButton $w={14} $h={13} $tone="#ddd" aria-label="Status menu"><Icon n="next" w={11} /></IconButton>
            <HTrack><Icon n="left" w={13} /><Thumb $w={20} $h={11} /><Icon n="right" w={13} /></HTrack>
          </Status>
        </Doc>

        <Dock>
          <Collapse aria-label="Expand dock"><Icon n="dblLeft" w={9} /></Collapse>
          {[["transform", "alignPanel", "pathfinder"], ["transparency", "layers", "links"], ["character", "paragraph", "opentype"], ["play", "libraries"]].map((g) => (
            <DockGroup key={g[0]}>
              <Grip />
              {g.map((n) => <IconButton key={n} $w={22} $h={22} aria-label={n}><Icon n={n} /></IconButton>)}
            </DockGroup>
          ))}
          <DockRest />
        </Dock>

        <Panels>
          <Collapse aria-label="Collapse panels"><Icon n="dblRight" w={9} /></Collapse>

          <Panel>
            <Tabs><Tab $on>Swatches</Tab><Tab>Color</Tab><Spacer /><IconButton $w={18} aria-label="Swatches menu"><Icon n="burger" /></IconButton></Tabs>
            <Body $h={99} $top={5}>
              <Row $h={22} $topAlign>
                <Pair $size={22}><i /><i /></Pair>
                <Spacer />
                <ViewToggle>
                  <IconButton $w={18} aria-label="List view"><Svg $w={11} viewBox="0 0 11 11"><path d="M0 1.500h11M0 4.500h11M0 7.500h11M0 10.500h11" /></Svg></IconButton>
                  <IconButton $w={19} aria-label="Grid view"><Svg $w={11} viewBox="0 0 11 11"><path {...F} d="M0 0h3v3H0zM4 0h3v3H4zM8 0h3v3H8zM0 4h3v3H0zM4 4h3v3H4zM8 4h3v3H8zM0 8h3v3H0zM4 8h3v3H4zM8 8h3v3H8z" /></Svg></IconButton>
                </ViewToggle>
              </Row>
              <SwatchBox>
                <div>
                  <SwatchGrid>
                    {swatches.map((s, i) => <Swatch key={i} $bg={s} aria-label={`Swatch ${i + 1}`} />)}
                    {Array.from({ length: 12 }, (_, i) => <span key={i} />)}
                    {grays.map((s, i) => <Swatch key={i} $bg={s} aria-label={`Gray ${i + 1}`} />)}
                  </SwatchGrid>
                </div>
                <SwatchScroll><Icon n="up" w={12} /><Thumb $w={8} $h={22} /><Icon n="down" w={12} /></SwatchScroll>
              </SwatchBox>
              <Footer $h={16}>
                {["swLib", "swShare", "swAdd", "swKind", "swOptions", "folder", "plus", "trash"].map((n) => (
                  <IconButton key={n} $w={14} aria-label={n}><Icon n={n} w={13} /></IconButton>
                ))}
              </Footer>
            </Body>
          </Panel>

          <Panel>
            <Tabs><Tab $on $sort><Icon n="sort" w={11} />Stroke</Tab><Tab>Gradient</Tab><Spacer /><IconButton $w={18} aria-label="Stroke menu"><Icon n="burger" /></IconButton></Tabs>
            <Body $h={149} $top={3}>
              <Row><RightLabel>Weight:</RightLabel><Numeric label="Weight" w={41} /></Row>
              <Row><RightLabel>Cap:</RightLabel><ToggleSet names={["capButt", "capRound", "capSquare"]} /></Row>
              <Row>
                <RightLabel>Corner:</RightLabel><ToggleSet names={["joinMiter", "joinRound", "joinBevel"]} />
                <Spacer /><Row as="label" $gap={3}>Limit:<Combo><Field $w={28} defaultValue="10" /></Combo>x</Row>
              </Row>
              <Row><RightLabel>Align Stroke:</RightLabel><ToggleSet names={["alCenter", "alIn", "alOut"]} /></Row>
              <Rule />
              <Row $h={25}>
                <CheckLabel><input type="checkbox" />Dashed Line</CheckLabel>
                <DashPair>
                  <IconButton $w={29} $tone="#777" aria-label="Exact dashes"><Icon n="dashA" w={24} h={16} /></IconButton>
                  <IconButton $w={30} $tone="#777" aria-label="Aligned dashes"><Icon n="dashB" w={24} h={16} /></IconButton>
                </DashPair>
              </Row>
              <DashGrid>
                {["dash", "gap", "dash", "gap", "dash", "gap"].map((n, i) => <label key={i}><input defaultValue="0 pt" />{n}</label>)}
              </DashGrid>
            </Body>
          </Panel>

          <Panel>
            <Tabs><Tab $on>Separations Preview</Tab><Tab>Attributes</Tab></Tabs>
            <Body $h={126} $top={3}>
              <Row $h={18}><CheckLabel><input type="checkbox" />Overprint Preview</CheckLabel></Row>
              <List $h={85}>
                {inks.map(([name, bg]) => (
                  <li key={name}>
                    <Cell $w={15} $line><IconButton $tone="#8e8e8e" $w={14} $h={14} aria-label={`Toggle ${name}`}><Icon n="eye" w={11} /></IconButton></Cell>
                    <InkChip $bg={bg} />
                    <Label $tone="#757575">{name}</Label>
                  </li>
                ))}
              </List>
              <Row $h={20}><CheckLabel $off><input type="checkbox" />Show Used Spot Colors Only</CheckLabel></Row>
            </Body>
          </Panel>

          <Panel $grow>
            <Tabs><Tab $on>Appearance</Tab><Tab>Transparency</Tab><Spacer /><IconButton $w={18} aria-label="Appearance menu"><Icon n="burger" /></IconButton></Tabs>
            <Body $top={4}>
              <List $h={82}>
                <li><Cell $w={18}><Well $s={14} $bg="#fff" aria-label="Thumbnail" /></Cell><Cell $w={20} /><AppLabel $w={40} $bold>No Selection</AppLabel></li>
                <li>
                  <Cell $w={18} $line><IconButton aria-label="Toggle stroke"><Icon n="eye" w={11} /></IconButton></Cell>
                  <Cell $w={20}><IconButton $w={18} $tone="#eee" aria-label="Expand stroke"><Icon n="right" w={14} /></IconButton></Cell>
                  <AppLabel $w={34} $link><span>Stroke:</span></AppLabel><Well $s={12} $bg="#000" aria-label="Stroke color" /><Cell $w={13} /><AppLabel $w={20}>1 pt</AppLabel>
                </li>
                <li>
                  <Cell $w={18} $line><IconButton aria-label="Toggle fill"><Icon n="eye" w={11} /></IconButton></Cell>
                  <Cell $w={20}><IconButton $w={18} $tone="#eee" aria-label="Expand fill"><Icon n="right" w={14} /></IconButton></Cell>
                  <AppLabel $w={34}>Fill:</AppLabel><Well $s={12} $bg="#fff" aria-label="Fill color" />
                </li>
                <li>
                  <Cell $w={18} $line><IconButton $tone={c.dim} aria-label="Toggle opacity"><Icon n="eye" w={11} /></IconButton></Cell>
                  <Cell $w={20} /><AppLabel $w={33} $link><span>Opacity:</span></AppLabel><AppLabel $w={30}>Default</AppLabel>
                </li>
              </List>
              <Footer $h={15}>
                <Row $h={14} $gap={4}>
                  <IconButton $h={14} aria-label="New stroke"><Icon n="square" w={12} /></IconButton>
                  <IconButton $h={14} aria-label="New fill"><Icon n="filled" w={12} /></IconButton>
                  <IconButton $h={14} $w={20} aria-label="Effects"><Fx>fx.</Fx></IconButton>
                </Row>
                <Row $h={14} $gap={5}>
                  <IconButton $h={14} aria-label="Clear"><Icon n="no" w={12} /></IconButton>
                  <IconButton $h={14} $tone={c.dim} aria-label="Duplicate"><Icon n="plus" w={12} /></IconButton>
                  <IconButton $h={14} $tone={c.dim} aria-label="Delete"><Icon n="trash" w={12} /></IconButton>
                </Row>
              </Footer>
            </Body>
          </Panel>
        </Panels>
      </Work>
      <Callout />
    </Shell>
  );
}
